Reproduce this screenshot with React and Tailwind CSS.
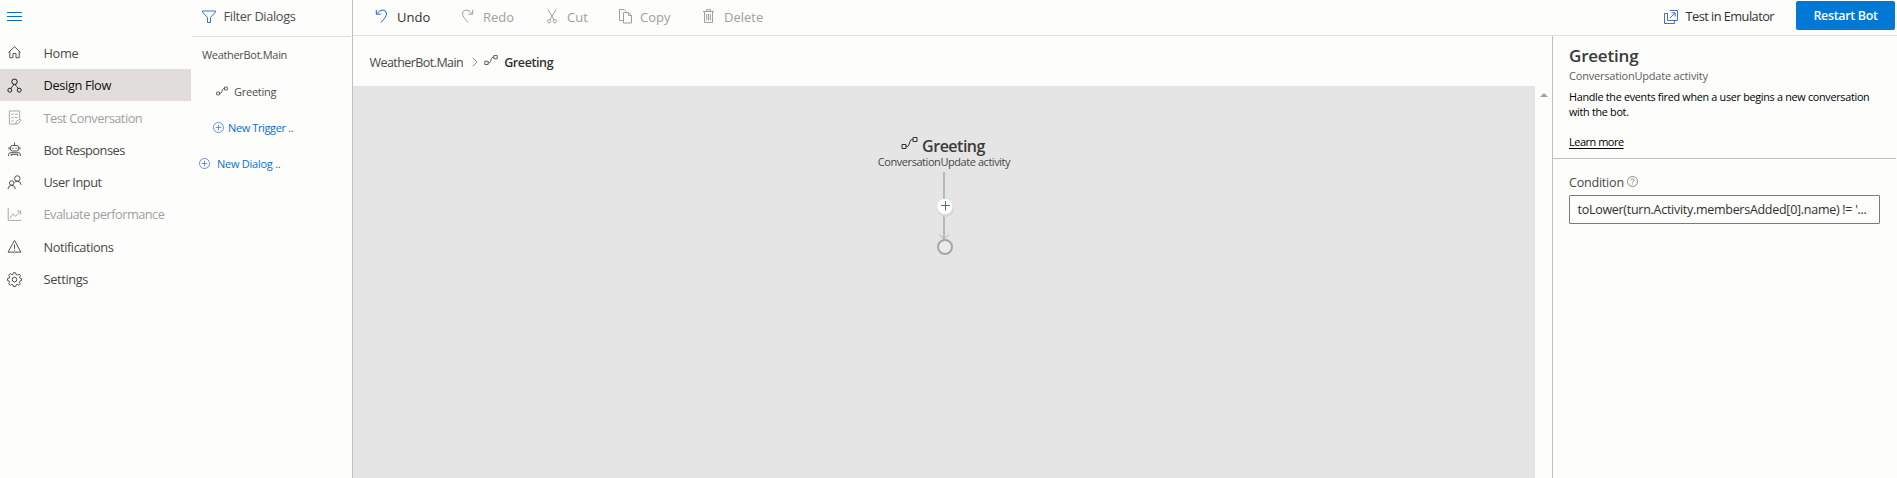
import React from "react";

function Icon({ className = "", box = "0 0 16 16", sw = 1, children }) {
  return (
    <svg viewBox={box} fill="none" stroke="currentColor" strokeWidth={sw} className={"block shrink-0 " + className}>
      {children}
    </svg>
  );
}

const icons = {
  home: <path d="M1.5 8 8 1.8 14.5 8M3 6.8V13.6H6.4V9H9.6V13.6H13V6.8" />,
  flow: (
    <>
      <circle cx="8" cy="4" r="2.9" />
      <circle cx="3" cy="13" r="2.1" />
      <circle cx="13" cy="13" r="2.1" />
      <path d="M7 6.7C6.8 9 5 9 4 11.2M9 6.7C9.2 9 11 9 12 11.2" />
    </>
  ),
  test: (
    <>
      <path d="M9 15H2.5V1H13.5V9M9 15 10 12 14 9.5 15.3 10.5 12 14.3Z" />
      <path d="M4.7 4.5 5.6 5.4 7 3.6M8.5 4.5H11.3M4.7 8 5.6 8.9 7 7.1M8.5 8H11.3M4.7 11.5 5.6 12.4 7 10.6" />
    </>
  ),
  bot: (
    <>
      <path d="M8 3.7V.5M5.5 3.7H10.5Q12.3 3.7 12.3 6V7.5Q12.3 9.6 10.3 9.6H5.7Q3.7 9.6 3.7 7.5V6Q3.7 3.7 5.5 3.7ZM2.2 5.3V8M13.8 5.3V8M6.3 6V7.4M9.7 6V7.4" />
      <path d="M1.7 15V13.4Q1.7 11.4 4 11.4H12Q14.3 11.4 14.3 13.4V15M4.5 15V13M11.5 15V13M4.5 13.2H11.5" />
    </>
  ),
  users: (
    <>
      <circle cx="11" cy="3.7" r="2.9" />
      <circle cx="5" cy="8.5" r="2.4" />
      <path d="M1 15Q1.5 11 5 11T9 15M8 7.8Q9.3 6.7 11 6.7Q14.4 6.7 15.2 10.5" />
    </>
  ),
  chart: <path d="M1.3 1V14.3H15.3M3 11.8 6.5 7.5 9 10 14.3 4.5M10.8 4.3H14.5V8" />,
  warn: <path d="M8 1.5 1.2 14H14.8ZM8 6V10.5M8 11.5V12.6" />,
  gear: (
    <>
      <path d="M6.8 .8H9.2L9.6 2.7 11.1 3.3 12.9 2.2 14.5 3.9 13.4 5.5 14 7 15.6 7.3V9.2L13.9 9.6 13.2 11 14.2 12.7 12.6 14.3 10.9 13.2 9.6 13.8 9.2 15.5H6.9L6.5 13.8 5.1 13.2 3.4 14.2 1.7 12.6 2.8 10.9 2.2 9.5.5 9.2V7L2.2 6.6 2.8 5.2 1.8 3.4 3.4 1.8 5.2 2.9 6.4 2.4Z" />
      <circle cx="8" cy="8.1" r="2.5" />
    </>
  ),
  plus: (
    <>
      <circle cx="8" cy="8" r="7.3" />
      <path d="M8 4V12M4 8H12" />
    </>
  ),
  link: (
    <>
      <path d="M1 8.5H5V12.5H1ZM12 1.5H16V5.5H12Z" />
      <path d="M5 10.5H6Q7.6 10.5 8 8.5L9 5.5Q9.5 3.5 11 3.5H12" />
    </>
  ),
};

const nav = [
  ["home", "Home", "tracking-[-0.35px]", "text-[#4a4846]"],
  ["flow", "Design Flow", "tracking-[-0.35px]", "text-[#111111] bg-[#e1dddb]"],
  ["test", "Test Conversation", "tracking-[-0.5px]", "text-[#a3a19f]"],
  ["bot", "Bot Responses", "tracking-[-0.5px]", "text-[#4a4846]"],
  ["users", "User Input", "tracking-[-0.47px]", "text-[#4a4846]"],
  ["chart", "Evaluate performance", "tracking-[-0.53px]", "text-[#a3a19f]"],
  ["warn", "Notifications", "tracking-[-0.42px]", "text-[#4a4846]"],
  ["gear", "Settings", "tracking-[-0.36px]", "text-[#4a4846]"],
];

function Sidebar() {
  return (
    <nav className="w-[191px] shrink-0">
      <div className="flex h-[36.8px] items-start pl-[7px] pt-[12px]">
        <svg viewBox="0 0 15 10" className="h-[10px] w-[15px] stroke-[#0f6cbd]"><path d="M0 .5H15M0 4.5H15M0 8.5H15" /></svg>
      </div>
      {nav.map(([icon, label, track, tone]) => (
        <div key={label} className={"flex h-[32.3px] items-center pl-[7px] " + tone}>
          <Icon className="h-[15px] w-[15px]">{icons[icon]}</Icon>
          <span className={"ml-[21.5px] text-[12.8px] leading-[18px] " + track}>{label}</span>
        </div>
      ))}
    </nav>
  );
}

function Dialogs() {
  return (
    <aside className="w-[162px] shrink-0 border-r border-[#c0c0c0] pl-px text-[11px] text-[#4f4d4b]">
      <div className="mr-px flex h-[37px] items-center border-b border-[#dedede] pb-[3px] pl-[10px]">
        <Icon className="h-[14px] w-[14px] text-[#2f76cf]" box="0 0 14 14"><path d="M.5 1H13.5V2L8.5 7.5V12.5H5.5V7.5L.5 2Z" /></Icon>
        <span className="ml-[7.5px] text-[12.8px] tracking-[-0.35px]">Filter Dialogs</span>
      </div>
      <div className="flex h-[37px] items-center pl-[10px] tracking-[-0.32px]">WeatherBot.Main</div>
      <div className="flex h-[37px] items-center pl-[24px]">
        <Icon className="h-[10px] w-[12px] -mt-[3px]" box="0 0 17 14" sw="1.2">{icons.link}</Icon>
        <span className="ml-[6px] font-medium tracking-[-0.25px]">Greeting</span>
      </div>
      <div className="flex h-[35px] items-center pl-[21px] text-[#0b6fce]">
        <Icon className="-mt-[3px] h-[11px] w-[11px] text-[#4c7fcf]" sw="1.2">{icons.plus}</Icon>
        <span className="ml-[4px] tracking-[-0.38px]">New Trigger ..</span>
      </div>
      <div className="flex h-[37px] items-center pl-[7px] text-[#0b6fce]">
        <Icon className="-mt-[3px] h-[11px] w-[11px] text-[#4c7fcf]" sw="1.2">{icons.plus}</Icon>
        <span className="ml-[7px] tracking-[-0.25px]">New Dialog ..</span>
      </div>
    </aside>
  );
}

function Tool({ w, gap, tone, icon, label }) {
  return (
    <div className={"flex items-center " + w + " " + gap + " " + tone}>
      {icon}
      <span className="text-[13px] tracking-[0px]">{label}</span>
    </div>
  );
}

function Toolbar() {
  const off = "text-[#a19f9d]";
  return (
    <header className="flex h-[36px] shrink-0 border-b border-[#e1e1e1] pl-[22px]">
      <div className="flex h-[35px] items-center">
        <Tool w="w-[86px]" gap="gap-[9px]" tone="text-[#333130]" label="Undo"
          icon={<Icon className="-mt-[3px] h-[15px] w-[13px] text-[#2766c0]" box="0 0 12 15"><path d="M.8.8V5.2H5.2M1 5Q4 1 7.5 1Q11 1.2 11 5Q11 7.4 5.5 13.5" /></Icon>} />
        <Tool w="w-[86px]" gap="gap-[9px]" tone={off} label="Redo"
          icon={<Icon className="-mt-[3px] h-[15px] w-[13px]" box="0 0 12 15"><path d="M11.2.8V5.2H6.8M11 5Q8 1 4.5 1Q1 1.2 1 5Q1 7.4 6.5 13.5" /></Icon>} />
        <Tool w="w-[72px]" gap="gap-[10px]" tone={off} label="Cut"
          icon={<Icon className="-mt-[2px] h-[15px] w-[10px]" box="0 0 10 15"><path d="M1 .5 7.2 11M9 .5 2.8 11" /><circle cx="2.2" cy="12.3" r="1.6" /><circle cx="7.8" cy="12.3" r="1.6" /></Icon>} />
        <Tool w="w-[84px]" gap="gap-[8px]" tone={off} label="Copy"
          icon={<Icon className="-mt-[2px] h-[15px] w-[13px]" box="0 0 13 15"><path d="M4 11.5H.5V.5H5L7 2.5M4.5 3.5H9.5L12.5 6.5V14H4.5ZM9.5 3.5V6.5H12.5" /></Icon>} />
        <Tool w="w-[80px]" gap="gap-[10px]" tone={off} label="Delete"
          icon={<Icon className="-mt-[2px] h-[15px] w-[11px]" box="0 0 11 15"><path d="M0 2.5H11M3.5 2.5V.7H7.5V2.5M1.5 2.5V13.5H9.5V2.5M3.7 5V11.5M5.5 5V11.5M7.3 5V11.5" /></Icon>} />
      </div>
      <div className="ml-auto flex items-start">
        <div className="flex h-[33px] items-center text-[#333130]">
          <Icon className="h-[14px] w-[14px] text-[#4b6fc4]" box="0 0 14 14"><path d="M3 3.5H.5V13.5H10.5V11M5.5.5H13.5V10.5H3.5V3M6 8 11 3M7.5 2.8H11.2V6.5" /></Icon>
          <span className="ml-[8px] text-[12.8px] tracking-[-0.55px]">Test in Emulator</span>
        </div>
        <button className="ml-[22px] mr-[2px] mt-px h-[29px] w-[99px] rounded-[2px] bg-[#0078d4] pt-[2px] text-[12.5px] font-semibold tracking-[-0.35px] text-white">Restart Bot</button>
      </div>
    </header>
  );
}

function Canvas() {
  return (
    <section className="flex min-w-0 flex-1 flex-col">
      <div className="flex h-[50px] shrink-0 items-center pl-[16.5px] pt-[4px] text-[12.5px] text-[#4a4846]">
        <span className="tracking-[-0.56px]">WeatherBot.Main</span>
        <Icon className="-mt-[2px] ml-[9px] h-[10px] w-[6px] text-[#8a8886]" box="0 0 6 10"><path d="M.7.7 5 5 .7 9.3" /></Icon>
        <Icon className="-mt-[7px] ml-[6px] h-[12px] w-[14px] text-[#605e5c]" box="0 0 17 14" sw="1.2">{icons.link}</Icon>
        <span className="ml-[6px] font-semibold tracking-[-0.4px] text-[#333130]">Greeting</span>
      </div>
      <div className="flex flex-1">
        <div className="flex flex-1 flex-col items-center bg-[#e5e5e5] pt-[49px] text-[#323130]">
          <div className="mr-[2px] flex h-[21px] items-center">
            <Icon className="-mt-[6px] h-[14px] w-[17px]" box="0 0 17 14">{icons.link}</Icon>
            <span className="ml-[4px] text-[16px] font-semibold leading-[22px] tracking-[-0.5px] text-[#3b3a39]">Greeting</span>
          </div>
          <div className="h-[16px] text-[11px] leading-[12px] tracking-[-0.44px] text-[#4a4846]">ConversationUpdate activity</div>
          <svg viewBox="0 0 20 84" className="ml-px h-[84px] w-[20px]" fill="none">
            <path d="M9 0V68" stroke="#b8b8b8" strokeWidth="2" />
            <path d="M4.2 62.5 9.2 67 14.2 62.5" stroke="#b3b3b3" />
            <circle cx="10.7" cy="36.5" r="8.5" fill="#d8d8d8" />
            <circle cx="10" cy="34.5" r="7.7" fill="#fff" />
            <path d="M10.5 29V38.5M6 33.5H15" stroke="#3a6fd0" />
            <circle cx="10" cy="75" r="7" fill="#ebebeb" stroke="#a6a6a6" strokeWidth="2" />
          </svg>
        </div>
        <div className="flex w-[17px] justify-center pt-[7px]">
          <svg viewBox="0 0 8 4" className="h-[4px] w-[8px] fill-[#a0a0a0]"><path d="M0 4 4 0 8 4Z" /></svg>
        </div>
      </div>
    </section>
  );
}

function Properties() {
  return (
    <aside className="w-[345px] shrink-0 border-l border-[#c0c0c0]">
      <div className="mr-px h-[123px] border-b border-[#c0c0c0] pl-[16px] pt-[9px]">
        <h1 className="text-[17px] font-semibold leading-[22px] tracking-[-0.2px] text-[#3b3a39]">Greeting</h1>
        <div className="mt-[1px] text-[11px] leading-[16px] tracking-[-0.2px] text-[#605e5c]">ConversationUpdate activity</div>
        <p className="mt-[5px] whitespace-nowrap text-[10.8px] leading-[15px] tracking-[-0.29px] text-black">
          Handle the events fired when a user begins a new conversation<br />with the bot.
        </p>
        <a className="mt-[15px] block text-[11px] leading-[15px] tracking-[-0.5px] text-black underline underline-offset-2">Learn more</a>
      </div>
      <div className="pl-[16px] pt-[15px]">
        <div className="flex h-[18px] items-center text-[12.5px] text-[#4a4846]">
          <span className="tracking-[-0.2px]">Condition</span>
          <Icon className="-mt-[3px] ml-[3px] h-[11px] w-[11px] text-[#605e5c]"><circle cx="8" cy="8" r="7.3" /><path d="M5.7 6.2Q5.8 4 8 4T10.3 6.2Q10.2 7.2 8.8 8Q8 8.5 8 9.7M8 11V12.3" /></Icon>
        </div>
        <div className="mt-[3px] flex h-[29px] w-[311px] items-center rounded-[1px] border border-[#7d7b79] pl-[7.5px] pt-[2px] text-[12.5px] tracking-[-0.28px] text-[#333130]">
          <span className="whitespace-nowrap">toLower(turn.Activity.membersAdded[0].name) != '...</span>
        </div>
      </div>
    </aside>
  );
}

export default function App() {
  return (
    <div className="flex h-[478px] w-[1897px] overflow-hidden bg-[#fdfdfb] font-['Open_Sans','Noto_Sans',sans-serif]">
      <Sidebar />
      <Dialogs />
      <div className="flex min-w-0 flex-1 flex-col">
        <Toolbar />
        <main className="flex min-h-0 flex-1">
          <Canvas />
          <Properties />
        </main>
      </div>
    </div>
  );
}
